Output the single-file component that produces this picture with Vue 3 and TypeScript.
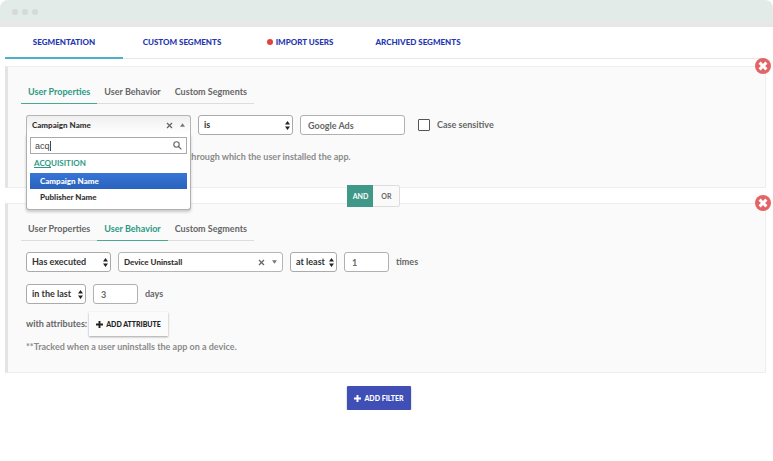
<script setup lang="ts">
import { ref } from 'vue'

const mainTabs = [
  { label: 'SEGMENTATION', dot: false },
  { label: 'CUSTOM SEGMENTS', dot: false },
  { label: 'IMPORT USERS', dot: true },
  { label: 'ARCHIVED SEGMENTS', dot: false },
]
const activeMain = ref(0)

const innerTabs = ['User Properties', 'User Behavior', 'Custom Segments']
const propertyTab = ref(0)
const behaviorTab = ref(1)

const query = ref('acq')
const property = ref('Campaign Name')
const properties = ['Campaign Name', 'Publisher Name']
const value = ref('Google Ads')
const caseSensitive = ref(false)
const joiner = ref('AND')
const times = ref('1')
const days = ref('3')
</script>

<template>
  <div class="window">
    <header class="titlebar"><i></i><i></i><i></i></header>

    <nav class="main-tabs">
      <button
        v-for="(tab, i) in mainTabs"
        :key="tab.label"
        type="button"
        class="main-tab"
        :class="{ active: activeMain === i }"
        @click="activeMain = i"
      >
        <span v-if="tab.dot" class="dot"></span>{{ tab.label }}
      </button>
    </nav>

    <main class="content">
      <section class="panel first">
        <button type="button" class="remove" aria-label="Remove filter">
          <svg viewBox="0 0 16 16"><path d="M4.6 4.6l6.8 6.8M11.4 4.6l-6.8 6.8" /></svg>
        </button>
        <div class="inner-tabs">
          <button
            v-for="(tab, i) in innerTabs"
            :key="tab"
            type="button"
            class="inner-tab"
            :class="{ active: propertyTab === i }"
            @click="propertyTab = i"
          >{{ tab }}</button>
        </div>
        <div class="row">
          <div class="combo open">
            <button type="button" class="combo-value">{{ property }}</button>
            <button type="button" class="combo-icon" aria-label="Clear property">
              <svg class="clear" viewBox="0 0 7 7"><path d="M1 1l5 5M6 1L1 6" /></svg>
            </button>
            <svg class="caret" viewBox="0 0 6 4"><path d="M3 0l3 4H0z" /></svg>
            <div class="menu">
              <div class="search">
                <input v-model="query" type="text" aria-label="Search properties" />
                <span class="cursor"></span>
                <svg viewBox="0 0 9 9"><circle cx="3.5" cy="3.5" r="2.7" /><path d="M5.5 5.5L8.4 8.4" /></svg>
              </div>
              <div class="group"><u>ACQ</u>UISITION</div>
              <button
                v-for="name in properties"
                :key="name"
                type="button"
                class="option"
                :class="{ selected: name === property }"
                @click="property = name"
              >{{ name }}</button>
            </div>
          </div>
          <label class="select is">
            <select aria-label="Comparison"><option>is</option></select>
            <svg viewBox="0 0 5 9"><path d="M2.5 0L5 3.6H0zM0 5.4h5L2.5 9z" /></svg>
          </label>
          <input v-model="value" class="field wide" type="text" aria-label="Value" />
          <label class="check">
            <input v-model="caseSensitive" type="checkbox" />
            <span>Case sensitive</span>
          </label>
        </div>
        <p class="hint behind">through which the user installed the app.</p>
      </section>

      <div class="joiner">
        <button
          v-for="name in ['AND', 'OR']"
          :key="name"
          type="button"
          :class="{ on: joiner === name }"
          @click="joiner = name"
        >{{ name }}</button>
      </div>

      <section class="panel second">
        <button type="button" class="remove" aria-label="Remove filter">
          <svg viewBox="0 0 16 16"><path d="M4.6 4.6l6.8 6.8M11.4 4.6l-6.8 6.8" /></svg>
        </button>
        <div class="inner-tabs">
          <button
            v-for="(tab, i) in innerTabs"
            :key="tab"
            type="button"
            class="inner-tab"
            :class="{ active: behaviorTab === i }"
            @click="behaviorTab = i"
          >{{ tab }}</button>
        </div>
        <div class="row">
          <label class="select executed">
            <select aria-label="Execution"><option>Has executed</option></select>
            <svg viewBox="0 0 5 9"><path d="M2.5 0L5 3.6H0zM0 5.4h5L2.5 9z" /></svg>
          </label>
          <div class="combo">
            <button type="button" class="combo-value">Device Uninstall</button>
            <button type="button" class="combo-icon" aria-label="Clear event">
              <svg class="clear" viewBox="0 0 7 7"><path d="M1 1l5 5M6 1L1 6" /></svg>
            </button>
            <svg class="caret" viewBox="0 0 6 4"><path d="M0 0h6L3 4z" /></svg>
          </div>
          <label class="select least">
            <select aria-label="Frequency"><option>at least</option></select>
            <svg viewBox="0 0 5 9"><path d="M2.5 0L5 3.6H0zM0 5.4h5L2.5 9z" /></svg>
          </label>
          <label class="unit"><input v-model="times" class="field" type="text" /><span>times</span></label>
        </div>
        <div class="row">
          <label class="select last">
            <select aria-label="Period"><option>in the last</option></select>
            <svg viewBox="0 0 5 9"><path d="M2.5 0L5 3.6H0zM0 5.4h5L2.5 9z" /></svg>
          </label>
          <label class="unit"><input v-model="days" class="field" type="text" /><span>days</span></label>
        </div>
        <div class="attributes">
          <span>with attributes:</span>
          <button type="button" class="add light">
            <svg viewBox="0 0 8 8"><path d="M4 0v8M0 4h8" /></svg>ADD ATTRIBUTE
          </button>
        </div>
        <p class="hint">**Tracked when a user uninstalls the app on a device.</p>
      </section>

      <button type="button" class="add primary">
        <svg viewBox="0 0 8 8"><path d="M4 0v8M0 4h8" /></svg>ADD FILTER
      </button>
    </main>
  </div>
</template>

<style>
body {
  background: #fff;
}
</style>

<style scoped>
.window {
  font-family: Lato, "Open Sans", sans-serif;
  font-size: 9px;
  font-weight: 700;
  line-height: 12px;
  color: #666;
}
.window * {
  box-sizing: border-box;
}
button,
input,
select {
  font: inherit;
  color: inherit;
  margin: 0;
  padding: 0;
  border: 0;
  background: none;
}
button {
  cursor: pointer;
}
svg {
  display: block;
  flex: none;
}
.titlebar {
  height: 27px;
  padding: 9px 12px;
  display: flex;
  gap: 4px;
  background: #e3ebe9;
  border-bottom: 4px solid #e8e7e6;
  border-radius: 8px 8px 0 0;
}
.titlebar i {
  width: 6px;
  height: 6px;
  border-radius: 50%;
  background: #d3dad8;
}
.main-tabs {
  display: flex;
  margin: 0 8px 0 5px;
  height: 32px;
  border-bottom: 1px solid #e7e7e7;
}
.main-tab {
  width: 118px;
  height: 32px;
  border-bottom: 2px solid transparent;
  color: #2536b2;
  font-size: 8px;
  font-weight: 900;
  white-space: nowrap;
  display: flex;
  align-items: center;
  justify-content: center;
  gap: 3px;
}
.main-tab.active {
  border-bottom-color: #4fb0cd;
}
.dot {
  width: 6px;
  height: 6px;
  border-radius: 50%;
  background: #e0433f;
}
.content {
  padding: 7px 7px 0 5px;
}
.panel {
  position: relative;
  background: #fafafa;
  border: 1px solid #eee;
  border-left: 3px solid #e4e4e4;
  padding: 13px 18px 0 13px;
}
.first {
  padding-bottom: 24px;
}
.second {
  padding-bottom: 19px;
}
.remove {
  position: absolute;
  top: -9px;
  right: -6px;
  width: 16px;
  height: 16px;
  border-radius: 50%;
  background: #e36464;
}
.remove svg {
  width: 16px;
  height: 16px;
  stroke: #fff;
  stroke-width: 3;
}
.inner-tabs {
  display: inline-flex;
  vertical-align: top;
  border-bottom: 1px solid #ddd;
}
.inner-tab {
  height: 24px;
  padding: 0 7px;
  margin-bottom: -1px;
  border-bottom: 1px solid transparent;
  white-space: nowrap;
}
.inner-tab.active {
  color: #2c9984;
  border-bottom-color: #4aa893;
}
.row {
  display: flex;
  gap: 7px;
  margin: 11px 0 0 5px;
}
.row + .row {
  margin-top: 12px;
}
.combo {
  position: relative;
  width: 165px;
  height: 20px;
  padding: 0 5px;
  display: flex;
  align-items: center;
  gap: 7px;
  border: 1px solid #b5b5b5;
  border-radius: 3px;
  background: #fff;
  color: #333;
  font-size: 8px;
  font-weight: 900;
}
.combo.open {
  background: linear-gradient(#efefef, #fff);
  border-radius: 3px 3px 0 0;
  border-bottom-color: #fff;
}
.combo-value {
  flex: 1;
  text-align: left;
}
.clear {
  width: 7px;
  height: 7px;
  stroke: #666;
  stroke-width: 1.3;
}
.caret {
  width: 5px;
  height: 4px;
  fill: #777;
}
.menu {
  position: absolute;
  z-index: 2;
  top: 18px;
  left: -1px;
  right: -1px;
  padding: 3px 3px 4px;
  background: #fff;
  border: 1px solid #b0b0b0;
  border-top: 0;
  border-radius: 0 0 3px 3px;
  box-shadow: 0 2px 3px rgba(0, 0, 0, 0.2);
}
.search {
  display: flex;
  align-items: center;
  height: 17px;
  padding: 0 4px;
  border: 1px solid #aaa;
  font-family: "Liberation Sans", sans-serif;
  font-size: 9px;
  font-weight: 400;
  color: #444;
}
.search input {
  width: 15px;
  outline: none;
}
.cursor {
  width: 1px;
  height: 10px;
  margin-right: auto;
  background: #444;
}
.search svg {
  width: 9px;
  height: 9px;
  fill: none;
  stroke: #666;
  stroke-width: 1.1;
}
.group {
  height: 19px;
  padding-left: 4px;
  line-height: 18px;
  color: #2c9984;
  font-weight: 700;
}
.option {
  display: block;
  width: 100%;
  height: 16px;
  padding-left: 10px;
  text-align: left;
}
.option.selected {
  color: #fff;
  background: linear-gradient(#3875d7, #2a62bc);
}
.select {
  position: relative;
  display: block;
  height: 20px;
}
.select select {
  width: 100%;
  height: 20px;
  padding: 0 5px;
  appearance: none;
  border: 1px solid #aaa;
  border-radius: 3px;
  background: #fff;
  color: #333;
}
.select svg {
  position: absolute;
  top: 6px;
  right: 3px;
  width: 5px;
  height: 9px;
  fill: #222;
}
.is {
  width: 95px;
}
.executed {
  width: 85px;
}
.least {
  width: 47px;
}
.last {
  width: 60px;
}
.field {
  width: 45px;
  height: 20px;
  padding: 0 7px;
  border: 1px solid #b0b0b0;
  border-radius: 3px;
  background: #fff;
}
.wide {
  width: 105px;
}
.check,
.unit {
  display: flex;
  align-items: center;
  gap: 7px;
}
.check {
  margin-left: 6px;
}
.check input {
  appearance: none;
  width: 12px;
  height: 12px;
  border: 1px solid #555;
  border-radius: 1px;
  background: #fff;
}
.check input:checked {
  background: #2c9984;
}
.hint {
  margin: 5px 0 0 5px;
  color: #8a8a8a;
}
.hint.behind {
  margin: 16px 0 0 167px;
}
.joiner {
  position: relative;
  z-index: 1;
  display: flex;
  width: 53px;
  margin: -3px 0 -4px 45%;
  border: 1px solid #ddd;
  border-radius: 2px;
  background: #fafafa;
  font-size: 7px;
}
.joiner button {
  flex: 1;
  height: 20px;
}
.joiner .on {
  margin: -1px 0 -1px -1px;
  height: 22px;
  color: #fff;
  background: #3f9888;
}
.attributes {
  display: flex;
  align-items: center;
  gap: 2px;
  margin: 8px 0 0 5px;
}
.add {
  display: flex;
  align-items: center;
  justify-content: center;
  gap: 3px;
  height: 24px;
  padding: 0 7px;
  font-size: 7px;
  font-weight: 900;
  white-space: nowrap;
  box-shadow: 0 1px 2px rgba(0, 0, 0, 0.35);
}
.add svg {
  width: 7px;
  height: 7px;
  fill: none;
  stroke: currentColor;
  stroke-width: 2.2;
}
.light {
  background: #fbfbfb;
  color: #222;
}
.primary {
  margin: 13px 0 0 45%;
  background: #3f4fb5;
  color: #fff;
  border-radius: 1px;
}
</style>
